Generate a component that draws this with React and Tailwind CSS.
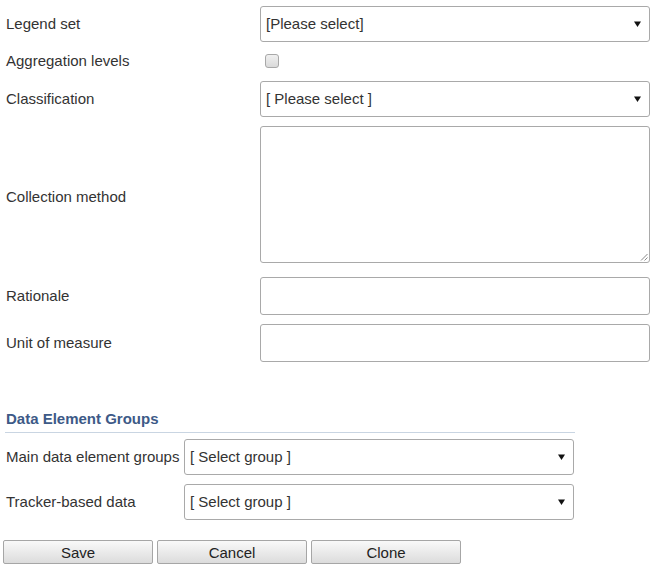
import React from 'react';

const font = { fontFamily: '"Liberation Sans", Arial, sans-serif' };

const Arrow = () => (
  <svg width="7" height="6" viewBox="0 0 7 6" className="absolute right-[8px] top-1/2 -translate-y-1/2">
    <path d="M0 0.5 H7 L3.5 6 Z" fill="#111" />
  </svg>
);

const SelectBox = ({ text, className = '' }) => (
  <div className={`relative flex items-center h-[36px] border border-[#a9a9a9] rounded-[3px] bg-white pl-[5px] text-[15px] text-[#333] ${className}`}>
    <span>{text}</span>
    <Arrow />
  </div>
);

const TextBox = ({ className = '' }) => (
  <div className={`border border-[#a9a9a9] rounded-[3px] bg-white ${className}`} />
);

const Label = ({ children, className = '' }) => (
  <div className={`flex items-center text-[15px] text-[#333] ${className}`}>{children}</div>
);

const Button = ({ children }) => (
  <button className="w-[150px] h-[24px] border border-[#a6a6a6] rounded-[2px] bg-gradient-to-b from-[#f9f9f9] to-[#dcdcdc] text-[15px] text-[#222] leading-none">
    {children}
  </button>
);

export default function App() {
  return (
    <div className="w-[657px] h-[571px] bg-white" style={font}>
      <div className="grid grid-cols-[254px_390px] pl-[6px] pt-[6px]">
        <Label className="pt-[1px]">Legend set</Label>
        <SelectBox text="[Please select]" />

        <div className="col-span-2 grid grid-cols-[254px_390px] mt-[8px] h-[18px]">
          <Label>Aggregation levels</Label>
          <div className="flex items-center pl-[5px]">
            <span className="w-[14px] h-[14px] rounded-[3px] border border-[#a8a8a8] bg-gradient-to-b from-[#f0f0f0] to-[#dadada]" />
          </div>
        </div>

        <div className="col-span-2 grid grid-cols-[254px_390px] mt-[13px]">
          <Label className="pt-[1px]">Classification</Label>
          <SelectBox text="[ Please select ]" />
        </div>

        <div className="col-span-2 grid grid-cols-[254px_390px] mt-[9px]">
          <Label className="pt-[5px]">Collection method</Label>
          <div className="relative h-[137px] border border-[#a9a9a9] rounded-[3px] bg-white">
            <svg width="8" height="8" viewBox="0 0 8 8" className="absolute right-[1px] bottom-[1px]">
              <path d="M7.5 1 L1 7.5 M7.5 4.5 L4.5 7.5" stroke="#888" strokeWidth="1" />
            </svg>
          </div>
        </div>

        <div className="col-span-2 grid grid-cols-[254px_390px] mt-[14px]">
          <Label>Rationale</Label>
          <TextBox className="h-[38px]" />
        </div>

        <div className="col-span-2 grid grid-cols-[254px_390px] mt-[9px]">
          <Label>Unit of measure</Label>
          <TextBox className="h-[38px]" />
        </div>
      </div>

      <div className="pl-[5px] mt-[48px] w-[575px]">
        <h3 className="pl-[1px] text-[15px] font-bold text-[#3d5a87] leading-[17px]">Data Element Groups</h3>
        <div className="mt-[5px] h-px bg-[#c9d5e2]" />
      </div>

      <div className="grid grid-cols-[178px_390px] pl-[6px] mt-[6px] gap-y-[9px]">
        <Label className="pt-[1px]">Main data element groups</Label>
        <SelectBox text="[ Select group ]" />
        <Label className="pt-[1px]">Tracker-based data</Label>
        <SelectBox text="[ Select group ]" />
      </div>

      <div className="flex gap-[4px] pl-[3px] mt-[20px]">
        <Button>Save</Button>
        <Button>Cancel</Button>
        <Button>Clone</Button>
      </div>
    </div>
  );
}
